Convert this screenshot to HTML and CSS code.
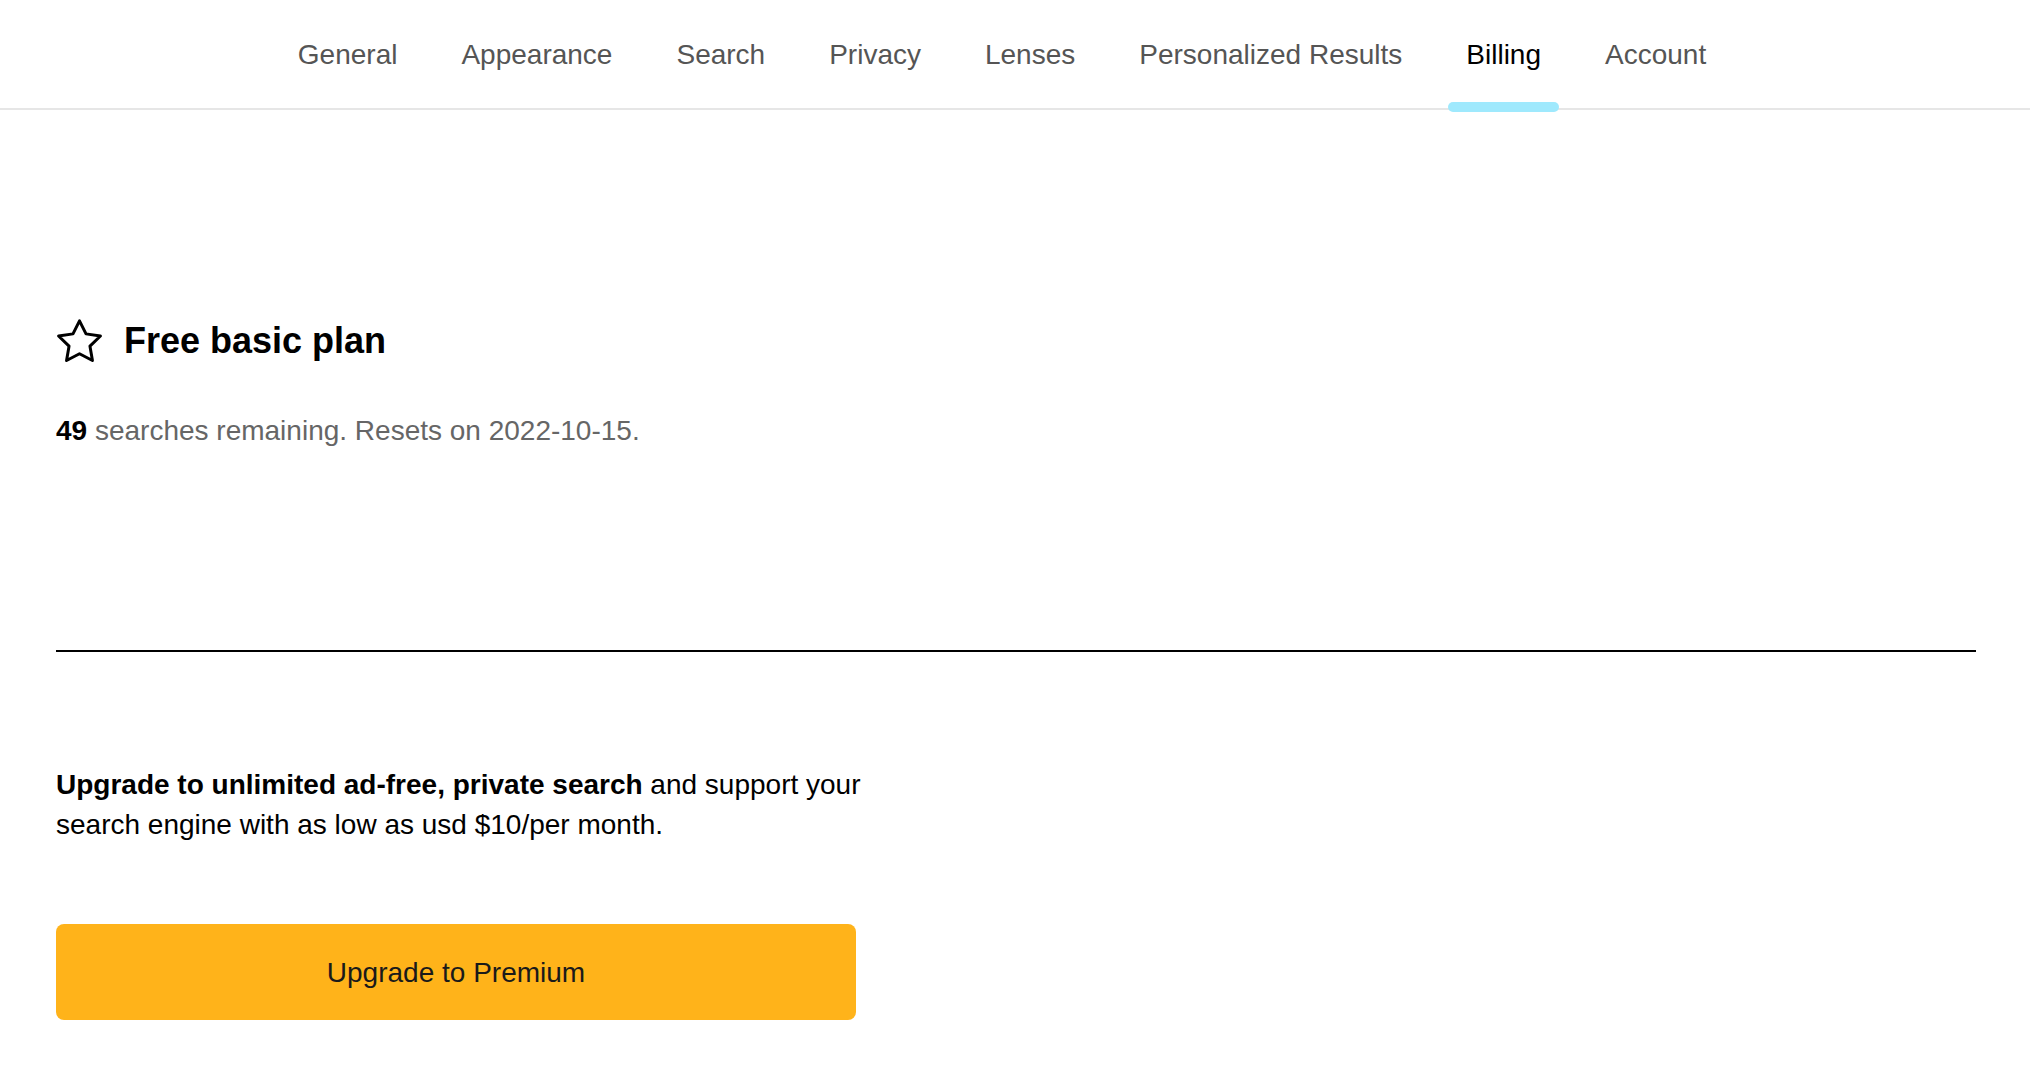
FILE: index.html
```html
<!DOCTYPE html>
<html lang="en">
<head>
<meta charset="utf-8">
<title>Billing</title>
<link rel="stylesheet" href="styles.css">
</head>
<body>
<nav class="tabs">
  <div class="tabs-inner">
    <a class="tab">General</a>
    <a class="tab">Appearance</a>
    <a class="tab">Search</a>
    <a class="tab">Privacy</a>
    <a class="tab">Lenses</a>
    <a class="tab">Personalized Results</a>
    <a class="tab active">Billing</a>
    <a class="tab">Account</a>
  </div>
</nav>
<main class="content">
  <div class="plan-head">
    <svg class="star" width="47" height="45" viewBox="1 1 22 21" fill="none" stroke="#000" stroke-width="1.4" stroke-linejoin="round" stroke-linecap="round">
      <path d="M12 2.3l3.05 6.1 6.75 1-4.9 4.75 1.16 6.7L12 17.7l-6.06 3.15 1.16-6.7-4.9-4.75 6.75-1z"/>
    </svg>
    <h1 class="plan-title">Free basic plan</h1>
  </div>
  <p class="remaining"><b>49</b> searches remaining. Resets on 2022-10-15.</p>
  <hr class="divider">
  <p class="upgrade-text"><b>Upgrade to unlimited ad-free, private search</b> and support your search engine with as low as usd $10/per month.</p>
  <button class="upgrade-btn">Upgrade to Premium</button>
</main>
</body>
</html>
```
FILE: styles.css
```css
html, body {
  margin: 0;
  padding: 0;
  background: #fff;
}
body {
  font-family: "Liberation Sans", Arial, Helvetica, sans-serif;
  color: #000;
}
.tabs {
  height: 108px;
  border-bottom: 2px solid #e6e6e6;
}
.tabs-inner {
  height: 100%;
  display: flex;
  justify-content: center;
  gap: 28px;
  padding-right: 26px;
}
.tab {
  position: relative;
  display: flex;
  align-items: center;
  padding: 2px 18px 0;
  font-size: 28px;
  color: #555;
  white-space: nowrap;
}
.tab.active {
  color: #000;
}
.tab.active::after {
  content: "";
  position: absolute;
  left: 0;
  right: 0;
  bottom: -4px;
  height: 10px;
  border-radius: 5px;
  background: #9fe9fd;
}
.content {
  padding: 208px 54px 0 56px;
}
.plan-head {
  display: flex;
  align-items: center;
  gap: 21px;
}
.star {
  display: block;
  flex: none;
}
.plan-title {
  margin: 0;
  font-size: 36px;
  line-height: 45px;
  font-weight: 700;
}
.remaining {
  margin: 48px 0 0;
  font-size: 28px;
  line-height: 40px;
  color: #666;
}
.remaining b {
  color: #000;
}
.divider {
  margin: 199px 0 0;
  border: 0;
  height: 2px;
  background: #000;
}
.upgrade-text {
  margin: 113px 0 0;
  width: 860px;
  font-size: 28px;
  line-height: 40px;
  color: #000;
}
.upgrade-btn {
  display: block;
  margin-top: 79px;
  width: 800px;
  height: 96px;
  padding: 2px 0 0;
  border: 0;
  border-radius: 8px;
  background: #ffb31a;
  font-family: inherit;
  font-size: 28px;
  color: #1a1a1a;
  cursor: pointer;
}
```
